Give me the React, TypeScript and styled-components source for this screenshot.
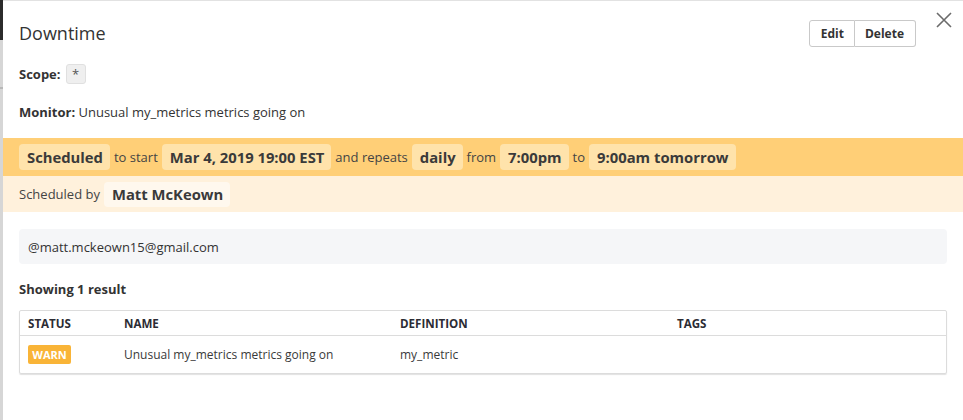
import React from "react";
import styled, { createGlobalStyle } from "styled-components";

const Global = createGlobalStyle`
  html, body { margin: 0; padding: 0; background: #fff; }
  body { font-family: "Open Sans", "DejaVu Sans", sans-serif; color: #333; }
  * { box-sizing: border-box; }
`;

const Page = styled.div`
  display: flex;
  width: 963px;
  height: 420px;
  overflow: hidden;
`;

const Strip = styled.div`
  width: 3px;
  flex: none;
  background: linear-gradient(
    #2b2b2b 0 40px,
    #d6d6d6 40px 87px,
    #b8b8b8 87px 89px,
    #d6d6d6 89px
  );
`;

const Modal = styled.div`
  position: relative;
  flex: 1;
  border-top: 1px solid #e2e2e2;
  display: flex;
  flex-direction: column;
`;

const Section = styled.div`
  padding: 0 16px;
`;

const Header = styled(Section)`
  display: flex;
  align-items: center;
  justify-content: space-between;
  padding-top: 18px;
  padding-right: 47px;
  height: 46px;
`;

const Title = styled.h1`
  margin: 0;
  font-size: 18px;
  font-weight: 400;
  color: #333;
  line-height: 26px;
`;

const BtnGroup = styled.div`
  display: flex;
`;

const Btn = styled.button<{ $first?: boolean }>`
  font-family: inherit;
  font-size: 12px;
  font-weight: 700;
  color: #333;
  background: #fff;
  height: 27px;
  padding: ${(p) => (p.$first ? "0 10px 0 11px" : "0 11px 0 10px")};
  border: 1px solid #c9c9c9;
  border-radius: ${(p) => (p.$first ? "3px 0 0 3px" : "0 3px 3px 0")};
  ${(p) => (p.$first ? "" : "border-left: none;")}
  cursor: pointer;
`;

const Close = styled.button`
  position: absolute;
  top: 10px;
  right: 10px;
  width: 18px;
  height: 18px;
  padding: 0;
  border: none;
  background: none;
  cursor: pointer;
`;

const Line = styled(Section)<{ $top: number }>`
  display: flex;
  align-items: center;
  gap: 5px;
  margin-top: ${(p) => p.$top}px;
  font-size: 13px;
  line-height: 20px;
`;

const Label = styled.span`
  font-weight: 700;
`;

const ScopeTag = styled.span`
  display: inline-flex;
  align-items: center;
  justify-content: center;
  width: 20px;
  height: 20px;
  background: #efefef;
  border: 1px solid #e0e0e0;
  border-radius: 3px;
  color: #555;
  font-size: 13px;
`;

const Band = styled(Section)<{ $bg: string; $h: number; $top?: number }>`
  display: flex;
  align-items: center;
  gap: 4px;
  background: ${(p) => p.$bg};
  height: ${(p) => p.$h}px;
  margin-top: ${(p) => p.$top ?? 0}px;
  font-size: 13px;
  color: #444;
`;

const Chip = styled.span<{ $bg: string; $h: number }>`
  display: inline-flex;
  align-items: center;
  height: ${(p) => p.$h}px;
  padding: 0 7px 0 8px;
  background: ${(p) => p.$bg};
  border-radius: 4px;
  font-size: 14.8px;
  font-weight: 700;
  color: #3a3a3a;
`;

const Email = styled.div`
  margin: 17px 16px 0;
  height: 35px;
  display: flex;
  align-items: center;
  padding: 0 9px;
  background: #f5f6f8;
  border-radius: 4px;
  font-size: 13px;
  color: #333;
`;

const Showing = styled(Section)`
  margin-top: 15px;
  font-size: 13px;
  font-weight: 700;
  line-height: 20px;
`;

const Table = styled.div`
  margin: 11px 16px 0;
  border: 1px solid #dcdcdc;
  border-radius: 2px;
  box-shadow: 0 1px 1px rgba(0, 0, 0, 0.12);
`;

const Row = styled.div<{ $head?: boolean }>`
  display: grid;
  grid-template-columns: 96px 276px 277px 1fr;
  align-items: center;
  height: ${(p) => (p.$head ? 25 : 37)}px;
  ${(p) => (p.$head ? "border-bottom: 1px solid #dcdcdc;" : "")}
  font-size: ${(p) => (p.$head ? 11.6 : 12)}px;
  font-weight: ${(p) => (p.$head ? 700 : 400)};
  color: ${(p) => (p.$head ? "#2c2c34" : "#3a3a3a")};
`;

const Cell = styled.div`
  padding: 0 8px;
  white-space: nowrap;
`;

const Warn = styled.span`
  display: inline-flex;
  align-items: center;
  height: 19px;
  width: 43px;
  justify-content: center;
  background: #f9b437;
  color: #fff;
  font-size: 11px;
  font-weight: 700;
  border-radius: 2px;
`;

export default function App() {
  return (
    <>
      <Global />
      <Page>
        <Strip />
        <Modal>
          <Header>
            <Title>Downtime</Title>
            <BtnGroup>
              <Btn $first>Edit</Btn>
              <Btn>Delete</Btn>
            </BtnGroup>
          </Header>
          <Close aria-label="Close">
            <svg width="18" height="18" viewBox="0 0 18 18">
              <path d="M2 2 L16 16 M16 2 L2 16" stroke="#6b6b6b" strokeWidth="1.6" fill="none" />
            </svg>
          </Close>
          <Line $top={17}>
            <Label>Scope:</Label>
            <ScopeTag>*</ScopeTag>
          </Line>
          <Line $top={18}>
            <span>
              <Label>Monitor:</Label> Unusual my_metrics metrics going on
            </span>
          </Line>
          <Band $bg="#ffcf77" $h={38} $top={16}>
            <Chip $bg="#ffe3ab" $h={26}>Scheduled</Chip>
            <span>to start</span>
            <Chip $bg="#ffe3ab" $h={26}>Mar 4, 2019 19:00 EST</Chip>
            <span>and repeats</span>
            <Chip $bg="#ffe3ab" $h={26}>daily</Chip>
            <span>from</span>
            <Chip $bg="#ffe3ab" $h={26}>7:00pm</Chip>
            <span>to</span>
            <Chip $bg="#ffe3ab" $h={26}>9:00am tomorrow</Chip>
          </Band>
          <Band $bg="#fff1dc" $h={36}>
            <span>Scheduled by</span>
            <Chip $bg="#fff8ee" $h={25}>Matt McKeown</Chip>
          </Band>
          <Email>@matt.mckeown15@gmail.com</Email>
          <Showing>Showing 1 result</Showing>
          <Table>
            <Row $head>
              <Cell>STATUS</Cell>
              <Cell>NAME</Cell>
              <Cell>DEFINITION</Cell>
              <Cell>TAGS</Cell>
            </Row>
            <Row>
              <Cell>
                <Warn>WARN</Warn>
              </Cell>
              <Cell>Unusual my_metrics metrics going on</Cell>
              <Cell>my_metric</Cell>
              <Cell />
            </Row>
          </Table>
        </Modal>
      </Page>
    </>
  );
}
